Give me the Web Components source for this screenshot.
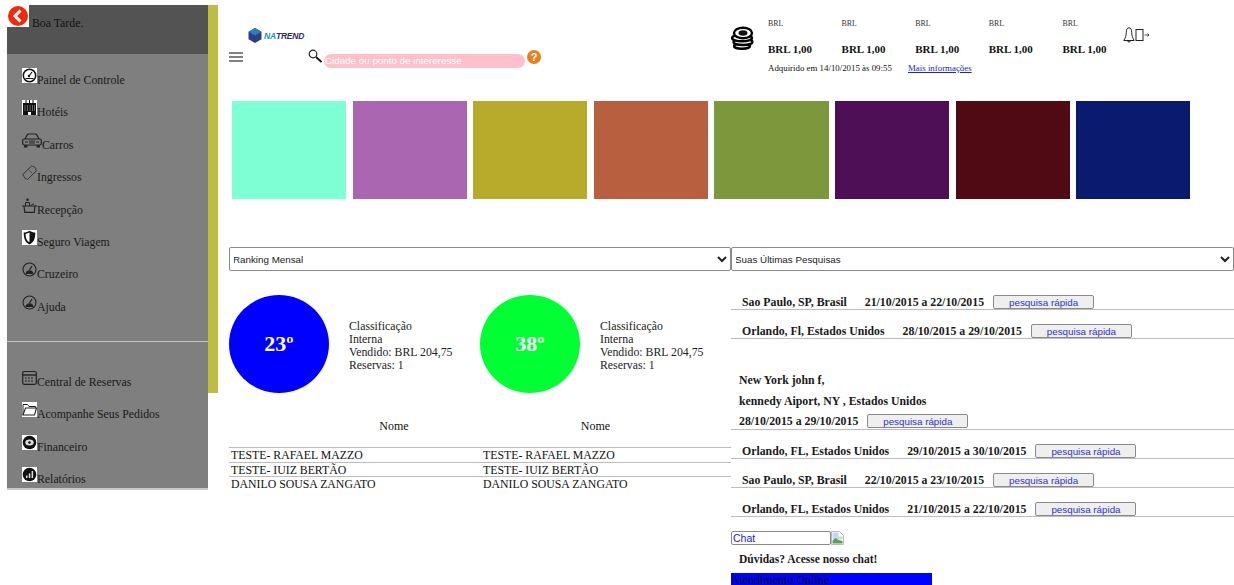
<!DOCTYPE html>
<html lang="pt-BR">
<head>
<meta charset="utf-8">
<title>Natrend</title>
<style>
  html, body { margin: 0; height: 585px; overflow: hidden; background: #fff; }
  body { display: flex; font-family: "Liberation Serif", serif; color: #111; }
</style>
</head>
<body>

<app-sidebar>
  <nav-item slot="top" icon="gauge">Painel de Controle</nav-item>
  <nav-item slot="top" icon="hotel">Hotéis</nav-item>
  <nav-item slot="top" icon="car">Carros</nav-item>
  <nav-item slot="top" icon="ticket">Ingressos</nav-item>
  <nav-item slot="top" icon="desk">Recepção</nav-item>
  <nav-item slot="top" icon="shield">Seguro Viagem</nav-item>
  <nav-item slot="top" icon="dial">Cruzeiro</nav-item>
  <nav-item slot="top" icon="dial">Ajuda</nav-item>
  <nav-item slot="bottom" icon="calendar">Central de Reservas</nav-item>
  <nav-item slot="bottom" icon="folder">Acompanhe Seus Pedidos</nav-item>
  <nav-item slot="bottom" icon="money">Financeiro</nav-item>
  <nav-item slot="bottom" icon="report">Relatórios</nav-item>
</app-sidebar>

<main-area>
  <top-header></top-header>
  <swatch-row></swatch-row>
  <two-columns>
    <div slot="left">
      <section-select>Ranking Mensal</section-select>
      <ranking-panel></ranking-panel>
    </div>
    <div slot="right">
      <section-select>Suas Últimas Pesquisas</section-select>
      <search-list>
        <search-row place="Sao Paulo, SP, Brasil" dates="21/10/2015 a 22/10/2015"></search-row>
        <search-row place="Orlando, Fl, Estados Unidos" dates="28/10/2015 a 29/10/2015"></search-row>
        <search-row stacked place="New York john f,|kennedy Aiport, NY , Estados Unidos" dates="28/10/2015 a 29/10/2015"></search-row>
        <search-row place="Orlando, FL, Estados Unidos" dates="29/10/2015 a 30/10/2015"></search-row>
        <search-row place="Sao Paulo, SP, Brasil" dates="22/10/2015 a 23/10/2015"></search-row>
        <search-row place="Orlando, FL, Estados Unidos" dates="21/10/2015 a 22/10/2015"></search-row>
      </search-list>
      <chat-box></chat-box>
    </div>
  </two-columns>
</main-area>

<script>
const ICONS = {
  gauge: `<svg width="15" height="15" viewBox="0 0 15 15"><rect width="15" height="15" fill="#fff"/><circle cx="7.5" cy="7.5" r="6.2" fill="none" stroke="#111" stroke-width="1.5"/><path d="M3.5 10.5h8M7 8l3-4" stroke="#111" stroke-width="1.2" fill="none"/><circle cx="7" cy="8" r="1.2" fill="#111"/></svg>`,
  hotel: `<svg width="15" height="15" viewBox="0 0 15 15"><rect width="15" height="15" fill="#fff"/><path d="M1 3h13v12H9v-3H6v3H1z" fill="#111"/><path d="M4 0v3M7.5 0v3M11 0v3" stroke="#111"/><path d="M3 5v6M5.500 5v6M8 5v6M10.500 5v6M12.500 5v6" stroke="#888" stroke-width=".7"/></svg>`,
  car: `<svg width="20" height="15" viewBox="0 0 20 15"><path d="M3 6l2-4c.3-.7 1-1 2-1h6c1 0 1.700.3 2 1l2 4" fill="none" stroke="#222" stroke-width="1.200"/><rect x=".7" y="6" width="18.600" height="6" rx="1.500" fill="none" stroke="#222" stroke-width="1.200"/><path d="M3 9h3M14 9h3M7 8h6M7 10h6" stroke="#222"/><path d="M2 12h3.500v2.500H2zM14.500 12H18v2.500h-3.500z" fill="#222"/></svg>`,
  ticket: `<svg width="15" height="15" viewBox="0 0 15 15"><path d="M.8 9.500L9.800.8c.5.8 1.400 1 2 .7l2.400 2.200c-.5.700-.3 1.500.3 2L5.500 14.500c-.5-.8-1.300-1-2-.6z" fill="none" stroke="#333"/><path d="M6.500 4.500L10.500 8.500" stroke="#333" stroke-dasharray="1 1"/></svg>`,
  desk: `<svg width="15" height="15" viewBox="0 0 15 15"><path d="M0 8h15M2 8l.8 6.300h9.400L13 8" fill="none" stroke="#222" stroke-width="1.200"/><circle cx="5.500" cy="1.800" r="1.300" fill="#222"/><path d="M3.500 8V4.500h4V8M9 8c0-1.300 1.200-2 3-2" fill="none" stroke="#222"/></svg>`,
  shield: `<svg width="15" height="15" viewBox="0 0 15 15"><rect width="15" height="15" fill="#fff"/><path d="M7.500 .8C9.500 2 11 2.600 13.300 2.600c0 6-1.300 9.800-5.800 11.800C3 12.400 1.700 8.600 1.700 2.600 4 2.600 5.500 2 7.500 .8z" fill="#111"/><path d="M7.500 2.600c-1.300.7-2.500 1.100-4 1.300.1 4 1 6.700 4 8.300z" fill="#fff"/></svg>`,
  dial: `<svg width="15" height="15" viewBox="0 0 15 15"><circle cx="7.500" cy="7.500" r="6.500" fill="none" stroke="#222" stroke-width="1.100"/><path d="M7.500 8L10 4" stroke="#222" stroke-width="1.200"/><path d="M3.500 12c0-2.500 1.800-3.800 4-3.800s4 1.300 4 3.800z" fill="#222"/></svg>`,
  calendar: `<svg width="15" height="15" viewBox="0 0 15 15"><rect x=".7" y="1.500" width="13.600" height="12.800" rx="1.500" fill="none" stroke="#222" stroke-width="1.200"/><path d="M1 5h13" stroke="#222" stroke-width="1.400"/><path d="M3 8h9M3 11h9" stroke="#222" stroke-dasharray="2 1"/></svg>`,
  folder: `<svg width="15" height="15" viewBox="0 0 15 15"><rect width="15" height="15" fill="#fff"/><path d="M1 13V2.500h4.500L7 4.500h6.500V6" fill="none" stroke="#222"/><path d="M1 13l2.500-7H14.500L12.500 13z" fill="none" stroke="#222" stroke-width="1.100"/></svg>`,
  money: `<svg width="15" height="15" viewBox="0 0 15 15"><rect width="15" height="15" fill="#fff"/><circle cx="7.500" cy="7.500" r="6.800" fill="#111"/><ellipse cx="7.500" cy="7.500" rx="4.200" ry="3" fill="#ddd"/><circle cx="7.500" cy="7.500" r="1.300" fill="#111"/></svg>`,
  report: `<svg width="15" height="15" viewBox="0 0 15 15"><rect width="15" height="15" fill="#fff"/><circle cx="7.500" cy="7.500" r="6.800" fill="#111"/><path d="M4 11V8.500h1.500V11zM6.800 11V6.500h1.500V11zM9.600 11V4h1.500v7z" fill="#ddd"/></svg>`
};

class AppSidebar extends HTMLElement {
  constructor() {
    super();
    this.attachShadow({ mode: 'open' }).innerHTML = `
    <style>
      :host { display: flex; align-items: flex-start; margin: 5px 0 0 7px; flex: none; width: 211px; height: 485px; font-size: 11.800px; }
      .panel { width: 201px; background: #7f7f7f; border-bottom: 2px solid #c9c9c9; }
      .hello { height: 49px; background: #545353; display: flex; align-items: flex-start; }
      .back { width: 22px; height: 22px; background: #fff; flex: none; }
      .hello span { margin: 11px 0 0 3px; line-height: 15px; }
      .group { display: flex; flex-direction: column; gap: 14.4px; padding-left: 15px; }
      .top { padding-top: 14px; padding-bottom: 28px; border-bottom: 1px solid #c4c4c4; }
      .bottom { padding-top: 28px; padding-bottom: 3px; }
      .strip { width: 10px; height: 388px; background: #bdbc43; }
    </style>
    <div class="panel">
      <div class="hello">
        <div class="back">
          <svg width="22" height="22" viewBox="0 0 22 22"><circle cx="11" cy="11" r="10" fill="#f0290f"/><path d="M13.500 5.500L8 11l5.500 5.500" fill="none" stroke="#fff" stroke-width="3"/></svg>
        </div>
        <span>Boa Tarde.</span>
      </div>
      <div class="group top"><slot name="top"></slot></div>
      <div class="group bottom"><slot name="bottom"></slot></div>
    </div>
    <div class="strip"></div>`;
  }
}
customElements.define('app-sidebar', AppSidebar);

class NavItem extends HTMLElement {
  constructor() {
    super();
    this.attachShadow({ mode: 'open' }).innerHTML = `
    <style>
      :host { display: block; height: 18px; line-height: 18px; white-space: nowrap; color: #1a1a1a; }
      svg { vertical-align: 1px; }
    </style>
    ${ICONS[this.getAttribute('icon')] || ''}<slot></slot>`;
  }
}
customElements.define('nav-item', NavItem);

class MainArea extends HTMLElement {
  constructor() {
    super();
    this.attachShadow({ mode: 'open' }).innerHTML = `
    <style>
      :host { display: flex; flex-direction: column; flex: none; width: 1005px; margin-left: 11px; }
    </style>
    <slot></slot>`;
  }
}
customElements.define('main-area', MainArea);

class TopHeader extends HTMLElement {
  constructor() {
    super();
    this.attachShadow({ mode: 'open' }).innerHTML = `
    <style>
      :host { display: flex; height: 101px; flex: none; }
      .brand { width: 502px; flex: none; padding-top: 28px; box-sizing: border-box; }
      .logo { display: flex; align-items: center; gap: 2px; margin-left: 19px; height: 15px; font: italic bold 8.500px "Liberation Sans", sans-serif; letter-spacing: -.2px; }
      .logo b { color: #1c8fc9; } .logo i { color: #2d2f66; }
      .tools { display: flex; align-items: flex-start; margin-top: 6px; }
      .burger { width: 14px; height: 10px; margin-top: 3px; }
      .lens { margin-left: 65px; }
      .search { width: 201px; height: 14px; margin: 5px 0 0 2px; border-radius: 7px; background: #ffc0cb; color: #fff; font: 9.800px/14px "Liberation Sans", sans-serif; padding-left: 1px; box-sizing: border-box; }
      .help { margin-left: 2px; margin-top: 1px; }
      .rates { flex: none; width: 503px; display: flex; align-items: flex-start; padding-top: 26px; box-sizing: border-box; }
      .coins { flex: none; margin-right: 13px; }
      .info { margin-top: -8px; width: 355px; flex: none; }
      .cols { display: flex; }
      .foot { display: flex; font-size: 8.850px; line-height: 12px; margin-top: 6px; }
      .foot span { width: 140px; }
      .foot a { color: #2222cc; text-decoration: underline; }
      .bell { flex: none; margin-top: 1px; }
    </style>
    <div class="brand">
      <div class="logo">
        <svg width="14" height="15" viewBox="0 0 14 15"><path d="M7 0l6.500 3.700v7.600L7 15 .5 11.300V3.700z" fill="#2b3f86"/><path d="M7 0l6.500 3.700L7 7.500.5 3.700z" fill="#2a7fb8"/></svg>
        <span><b>NA</b><i>TREND</i></span>
      </div>
      <div class="tools">
        <svg class="burger" viewBox="0 0 14 10"><path d="M0 1h14M0 5h14M0 9h14" stroke="#808080" stroke-width="1.800"/></svg>
        <svg class="lens" width="14" height="14" viewBox="0 0 14 14"><circle cx="5" cy="5" r="3.800" fill="#fff" stroke="#222" stroke-width="1.200"/><path d="M8 8l5.500 5" stroke="#111" stroke-width="1.800"/></svg>
        <div class="search">Cidade ou ponto de intereresse</div>
        <svg class="help" width="14" height="14" viewBox="0 0 14 14"><circle cx="7" cy="7" r="7" fill="#e8811b"/><text x="7" y="11" text-anchor="middle" font-family="Liberation Sans" font-weight="700" font-size="11" fill="#fff">?</text></svg>
      </div>
    </div>
    <div class="rates">
      <svg class="coins" width="24" height="24" viewBox="0 0 24 24"><g fill="#fff" stroke="#000" stroke-width="2.400"><ellipse cx="11" cy="20" rx="8" ry="2.800"/><ellipse cx="12" cy="16" rx="9.500" ry="3"/><ellipse cx="11" cy="12" rx="10" ry="3.300"/><ellipse cx="12" cy="7" rx="9" ry="5.300"/></g><ellipse cx="12" cy="7" rx="4.500" ry="2.800" fill="#111"/></svg>
      <div class="info">
        <div class="cols">
          <rate-col></rate-col><rate-col></rate-col><rate-col></rate-col><rate-col></rate-col><rate-col></rate-col>
        </div>
        <div class="foot"><span>Adquirido em 14/10/2015 às 09:55</span><a href="#">Mais informações</a></div>
      </div>
      <svg class="bell" width="28" height="16" viewBox="0 0 28 16"><path d="M6 .8C4 .8 3.300 2.500 3.300 5.500c0 3-.8 5-2.500 8h10.400c-1.700-3-2.500-5-2.500-8C8.700 2.500 8 .8 6 .8z" fill="#fff" stroke="#222"/><path d="M4.500 14c0 1.300 3 1.300 3 0" fill="none" stroke="#222"/><rect x="13" y="2.500" width="7" height="11" fill="#fff" stroke="#222"/><path d="M21.500 8h4.500M24.500 6.500L26 8l-1.500 1.500" fill="none" stroke="#222" stroke-width=".8"/></svg>
    </div>`;
  }
}
customElements.define('top-header', TopHeader);

class RateCol extends HTMLElement {
  constructor() {
    super();
    this.attachShadow({ mode: 'open' }).innerHTML = `
    <style>
      :host { display: block; width: 73.600px; flex: none; }
      small { display: block; font-size: 7.900px; line-height: 12px; color: #333; }
      b { display: block; font-size: 11px; line-height: 14px; margin-top: 12px; white-space: nowrap; }
    </style>
    <small>BRL</small><b>BRL 1,00</b>`;
  }
}
customElements.define('rate-col', RateCol);

class SwatchRow extends HTMLElement {
  constructor() {
    super();
    const colors = ['#7fffd4', '#aa66b0', '#b8aa2a', '#b85f40', '#7d973c', '#4f0f57', '#4f0a14', '#0a1a6e'];
    this.attachShadow({ mode: 'open' }).innerHTML = `
    <style>
      :host { display: flex; gap: 6.300px; height: 98px; flex: none; padding-left: 3px; margin-bottom: 48px; }
      div { width: 114.300px; flex: none; }
    </style>
    ${colors.map(c => `<div style="background:${c}"></div>`).join('')}`;
  }
}
customElements.define('swatch-row', SwatchRow);

class TwoColumns extends HTMLElement {
  constructor() {
    super();
    this.attachShadow({ mode: 'open' }).innerHTML = `
    <style>
      :host { display: grid; grid-template-columns: 502px 503px; }
    </style>
    <slot name="left"></slot><slot name="right"></slot>`;
  }
}
customElements.define('two-columns', TwoColumns);

class SectionSelect extends HTMLElement {
  constructor() {
    super();
    this.attachShadow({ mode: 'open' }).innerHTML = `
    <style>
      :host { display: block; }
      select { display: block; width: 100%; height: 24px; font: 9.800px "Liberation Sans", sans-serif; color: #222; background: #fff; border: 1px solid #8a8a8a; border-radius: 2px; padding-left: 0; text-indent: -1px; }
    </style>
    <select><option>${this.textContent}</option></select>`;
  }
}
customElements.define('section-select', SectionSelect);

class RankingPanel extends HTMLElement {
  constructor() {
    super();
    const names = ['TESTE- RAFAEL MAZZO', 'TESTE- IUIZ BERTÃO', 'DANILO SOUSA ZANGATO'];
    this.attachShadow({ mode: 'open' }).innerHTML = `
    <style>
      :host { display: block; padding-top: 24px; font-size: 11.800px; }
      .cards { display: grid; grid-template-columns: 251px 251px; }
      .nomes { display: grid; grid-template-columns: 251px 251px; margin-top: 26px; font-size: 12px; line-height: 15px; height: 28px; }
      .nomes span:first-child { text-align: center; padding-left: 79px; }
      .nomes span:last-child { text-align: center; padding-right: 20px; }
      .row { display: grid; grid-template-columns: 251px 251px; border-top: 1px solid #bdbdbd; height: 13.500px; line-height: 14px; }
      .row span { padding-left: 2px; white-space: nowrap; }
      .row span + span { padding-left: 3px; }
    </style>
    <div class="cards">
      <rank-card pos="23º" color="#0000ff"></rank-card>
      <rank-card pos="38º" color="#00ff33"></rank-card>
    </div>
    <div class="nomes"><span>Nome</span><span>Nome</span></div>
    ${names.map(n => `<div class="row"><span>${n}</span><span>${n}</span></div>`).join('')}`;
  }
}
customElements.define('ranking-panel', RankingPanel);

class RankCard extends HTMLElement {
  constructor() {
    super();
    this.attachShadow({ mode: 'open' }).innerHTML = `
    <style>
      :host { display: flex; align-items: center; font-size: 11.800px; line-height: 13px; color: #222; }
      .ball { width: 100px; height: 98px; border-radius: 50%; flex: none; display: flex; align-items: center; justify-content: center; color: #fff; font-weight: bold; font-size: 22px; padding-bottom: 2px; box-sizing: border-box; background: ${this.getAttribute('color')}; }
      .txt { margin: 4px 0 0 20px; }
    </style>
    <div class="ball">${this.getAttribute('pos')}</div>
    <div class="txt">Classificação<br>Interna<br>Vendido: BRL 204,75<br>Reservas: 1</div>`;
  }
}
customElements.define('rank-card', RankCard);

class SearchList extends HTMLElement {
  constructor() {
    super();
    this.attachShadow({ mode: 'open' }).innerHTML = `
    <style>
      :host { display: block; padding-top: 10px; }
    </style>
    <slot></slot>`;
  }
}
customElements.define('search-list', SearchList);

class SearchRow extends HTMLElement {
  constructor() {
    super();
    const place = this.getAttribute('place').split('|');
    const dates = this.getAttribute('dates');
    const btn = '<button>pesquisa rápida</button>';
    const body = this.hasAttribute('stacked')
      ? `<div class="stack">${place.map(p => `<div>${p}</div>`).join('')}<div class="line"><span>${dates}</span>${btn}</div></div>`
      : `<div class="line in"><span class="place">${place[0]}</span><span>${dates}</span>${btn}</div>`;
    this.attachShadow({ mode: 'open' }).innerHTML = `
    <style>
      :host { display: block; border-bottom: 1px solid #bdbdbd; font-size: 11.800px; font-weight: bold; color: #1a1a1a; }
      .line { display: flex; align-items: center; }
      .in { height: 28px; padding: 14px 0 0 11px; box-sizing: border-box; }
      .place { margin-right: 18px; }
      .stack { padding: 31px 0 0 8px; line-height: 20.500px; height: 59px; }
      button { width: 101px; height: 14px; margin-left: 9px; padding: 0; font: 9.800px "Liberation Sans", sans-serif; color: #3030d8; background: #efefef; border: 1px solid #8a8a8a; border-radius: 2px; }
    </style>
    ${body}`;
  }
}
customElements.define('search-row', SearchRow);

class ChatBox extends HTMLElement {
  constructor() {
    super();
    this.attachShadow({ mode: 'open' }).innerHTML = `
    <style>
      :host { display: block; padding-top: 14px; }
      .top { display: flex; align-items: flex-start; }
      input { width: 100px; height: 14px; box-sizing: border-box; padding: 0 1px; border: 1px solid #8a8a8a; border-radius: 2px; font: 10.500px "Liberation Sans", sans-serif; color: #2020e0; }
      input::placeholder { color: #2020e0; opacity: 1; }
      p { margin: 7px 0 7px 8px; font-size: 11.500px; line-height: 14px; font-weight: bold; color: #1a1a1a; }
      .bar { width: 201px; height: 16px; background: #0000ff; font-size: 12px; line-height: 14px; color: #111; }
    </style>
    <div class="top">
      <input placeholder="Chat">
      <svg width="13" height="14" viewBox="0 0 13 14"><path d="M.5.5h8l4 4v9H.5z" fill="#fff" stroke="#bbb"/><path d="M1.500 1.500h6v4h4v3l-10 0z" fill="#c5d9f5"/><path d="M1.500 12.500v-3l3-2.500 3 2 4 1v2.500z" fill="#5da24f"/></svg>
    </div>
    <p>Dúvidas? Acesse nosso chat!</p>
    <div class="bar">Atendimento Online</div>`;
  }
}
customElements.define('chat-box', ChatBox);
</script>
</body>
</html>
